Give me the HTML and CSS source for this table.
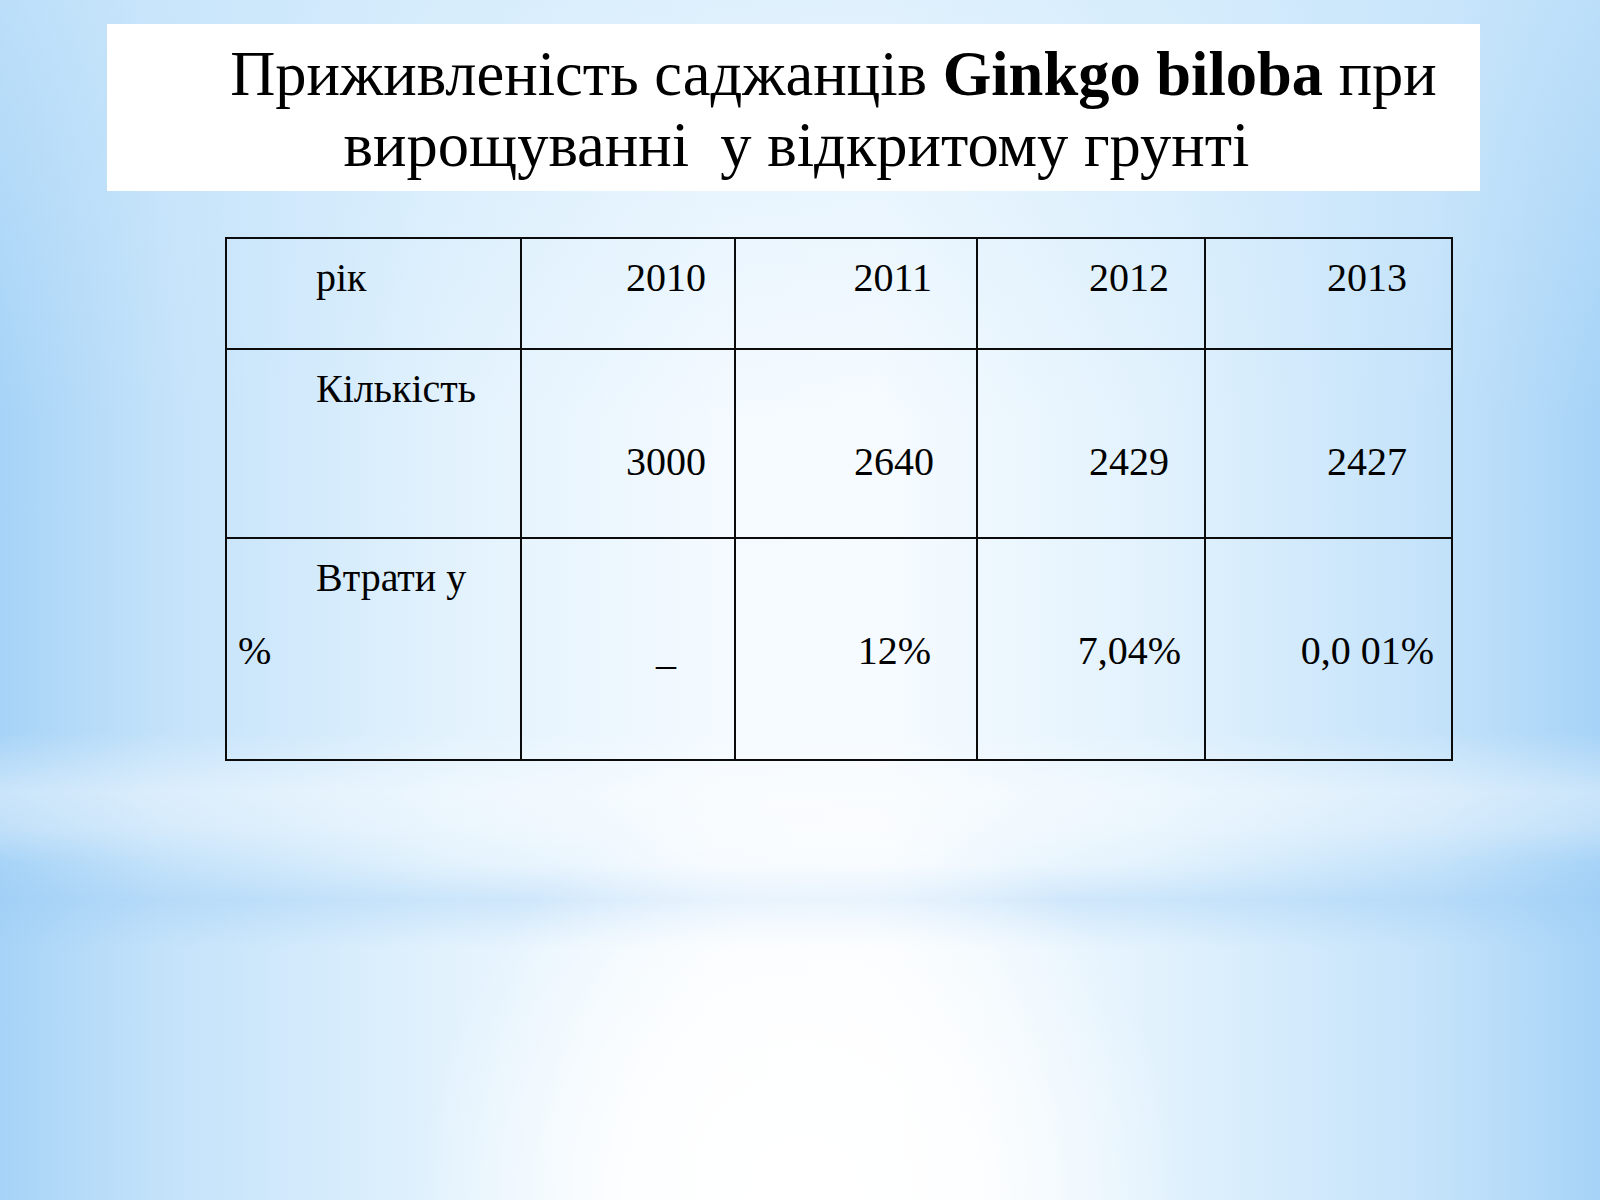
FILE: index.html
```html
<!DOCTYPE html>
<html lang="uk">
<head>
<meta charset="utf-8">
<title>Приживленість саджанців Ginkgo biloba</title>
<link rel="stylesheet" href="styles.css">
</head>
<body>
<div class="slide">
  <div class="title-box">
    <div class="t-line t-line1">Приживленість саджанців <b>Ginkgo biloba</b> при</div>
    <div class="t-line t-line2">вирощуванні&nbsp; у відкритому грунті</div>
  </div>
  <table class="data">
    <colgroup>
      <col class="c1"><col class="c2"><col class="c3"><col class="c4"><col class="c5">
    </colgroup>
    <tr class="r1">
      <td class="lab"><span class="ind">рік</span></td>
      <td class="num p28">2010</td>
      <td class="num p44">2011</td>
      <td class="num p35">2012</td>
      <td class="num p44">2013</td>
    </tr>
    <tr class="r2">
      <td class="lab"><span class="ind">Кількість</span></td>
      <td class="num p28"><br>3000</td>
      <td class="num p42"><br>2640</td>
      <td class="num p35"><br>2429</td>
      <td class="num p44"><br>2427</td>
    </tr>
    <tr class="r3">
      <td class="lab"><span class="ind">Втрати у</span><br>%</td>
      <td class="num p58"><br>_</td>
      <td class="num p45"><br>12%</td>
      <td class="num p23"><br>7,04%</td>
      <td class="num p17"><br>0,0 01%</td>
    </tr>
  </table>
</div>
</body>
</html>
```
FILE: styles.css
```css
html, body {
  margin: 0;
  padding: 0;
}

body {
  width: 1600px;
  height: 1200px;
  overflow: hidden;
  font-family: "Liberation Serif", "Times New Roman", serif;
  color: #000;
  background:
    radial-gradient(ellipse 380px 420px at 50% 100%, rgba(255,255,255,1) 0%, rgba(255,255,255,0.85) 45%, rgba(255,255,255,0) 100%),
    linear-gradient(to bottom,
      rgba(255,255,255,0) 0%,
      rgba(255,255,255,0) 61%,
      rgba(255,255,255,0.4) 66%,
      rgba(255,255,255,0.3) 69%,
      rgba(255,255,255,0) 72%,
      rgba(150,200,245,0.3) 75%,
      rgba(255,255,255,0) 79%,
      rgba(255,255,255,0) 100%),
    linear-gradient(to bottom, rgba(205,232,251,0.55) 0%, rgba(205,232,251,0) 35%),
    linear-gradient(to right,
      #a6d3f7 0%,
      #c3e2fa 10%,
      #e2f2fd 28%,
      #f4faff 45%,
      #f6fbff 55%,
      #e2f2fd 72%,
      #c3e2fa 90%,
      #a6d3f7 100%);
}

.slide {
  display: flex;
  flex-direction: column;
  padding-top: 24px;
}

.title-box {
  margin-left: 107px;
  width: 1373px;
  height: 167px;
  box-sizing: border-box;
  background: #ffffff;
  padding-top: 15px;
  font-size: 62.5px;
  line-height: 71px;
  white-space: nowrap;
}

.t-line {
  text-align: center;
}

.t-line1 {
  padding-left: 80px;
}

.t-line2 {
  padding-left: 6px;
}

.data {
  margin-top: 46px;
  margin-left: 225px;
  width: 1226px;
  border-collapse: collapse;
  table-layout: fixed;
  font-size: 40px;
  line-height: 73px;
}

.c1 { width: 295px; }
.c2 { width: 214px; }
.c3 { width: 242px; }
.c4 { width: 228px; }
.c5 { width: 247px; }

.data td {
  border: 2px solid #0b0b0b;
  vertical-align: top;
  padding: 2px 0 0 0;
  white-space: nowrap;
}

.r1 { height: 111px; }
.r2 { height: 189px; }
.r3 { height: 222px; }

.lab {
  padding-left: 11px !important;
  text-align: left;
}

.ind {
  display: inline-block;
  padding-left: 78px;
}

.num { text-align: right; }

.p17 { padding-right: 17px !important; }
.p23 { padding-right: 23px !important; }
.p28 { padding-right: 28px !important; }
.p35 { padding-right: 35px !important; }
.p42 { padding-right: 42px !important; }
.p44 { padding-right: 44px !important; }
.p45 { padding-right: 45px !important; }
.p58 { padding-right: 58px !important; }
```
